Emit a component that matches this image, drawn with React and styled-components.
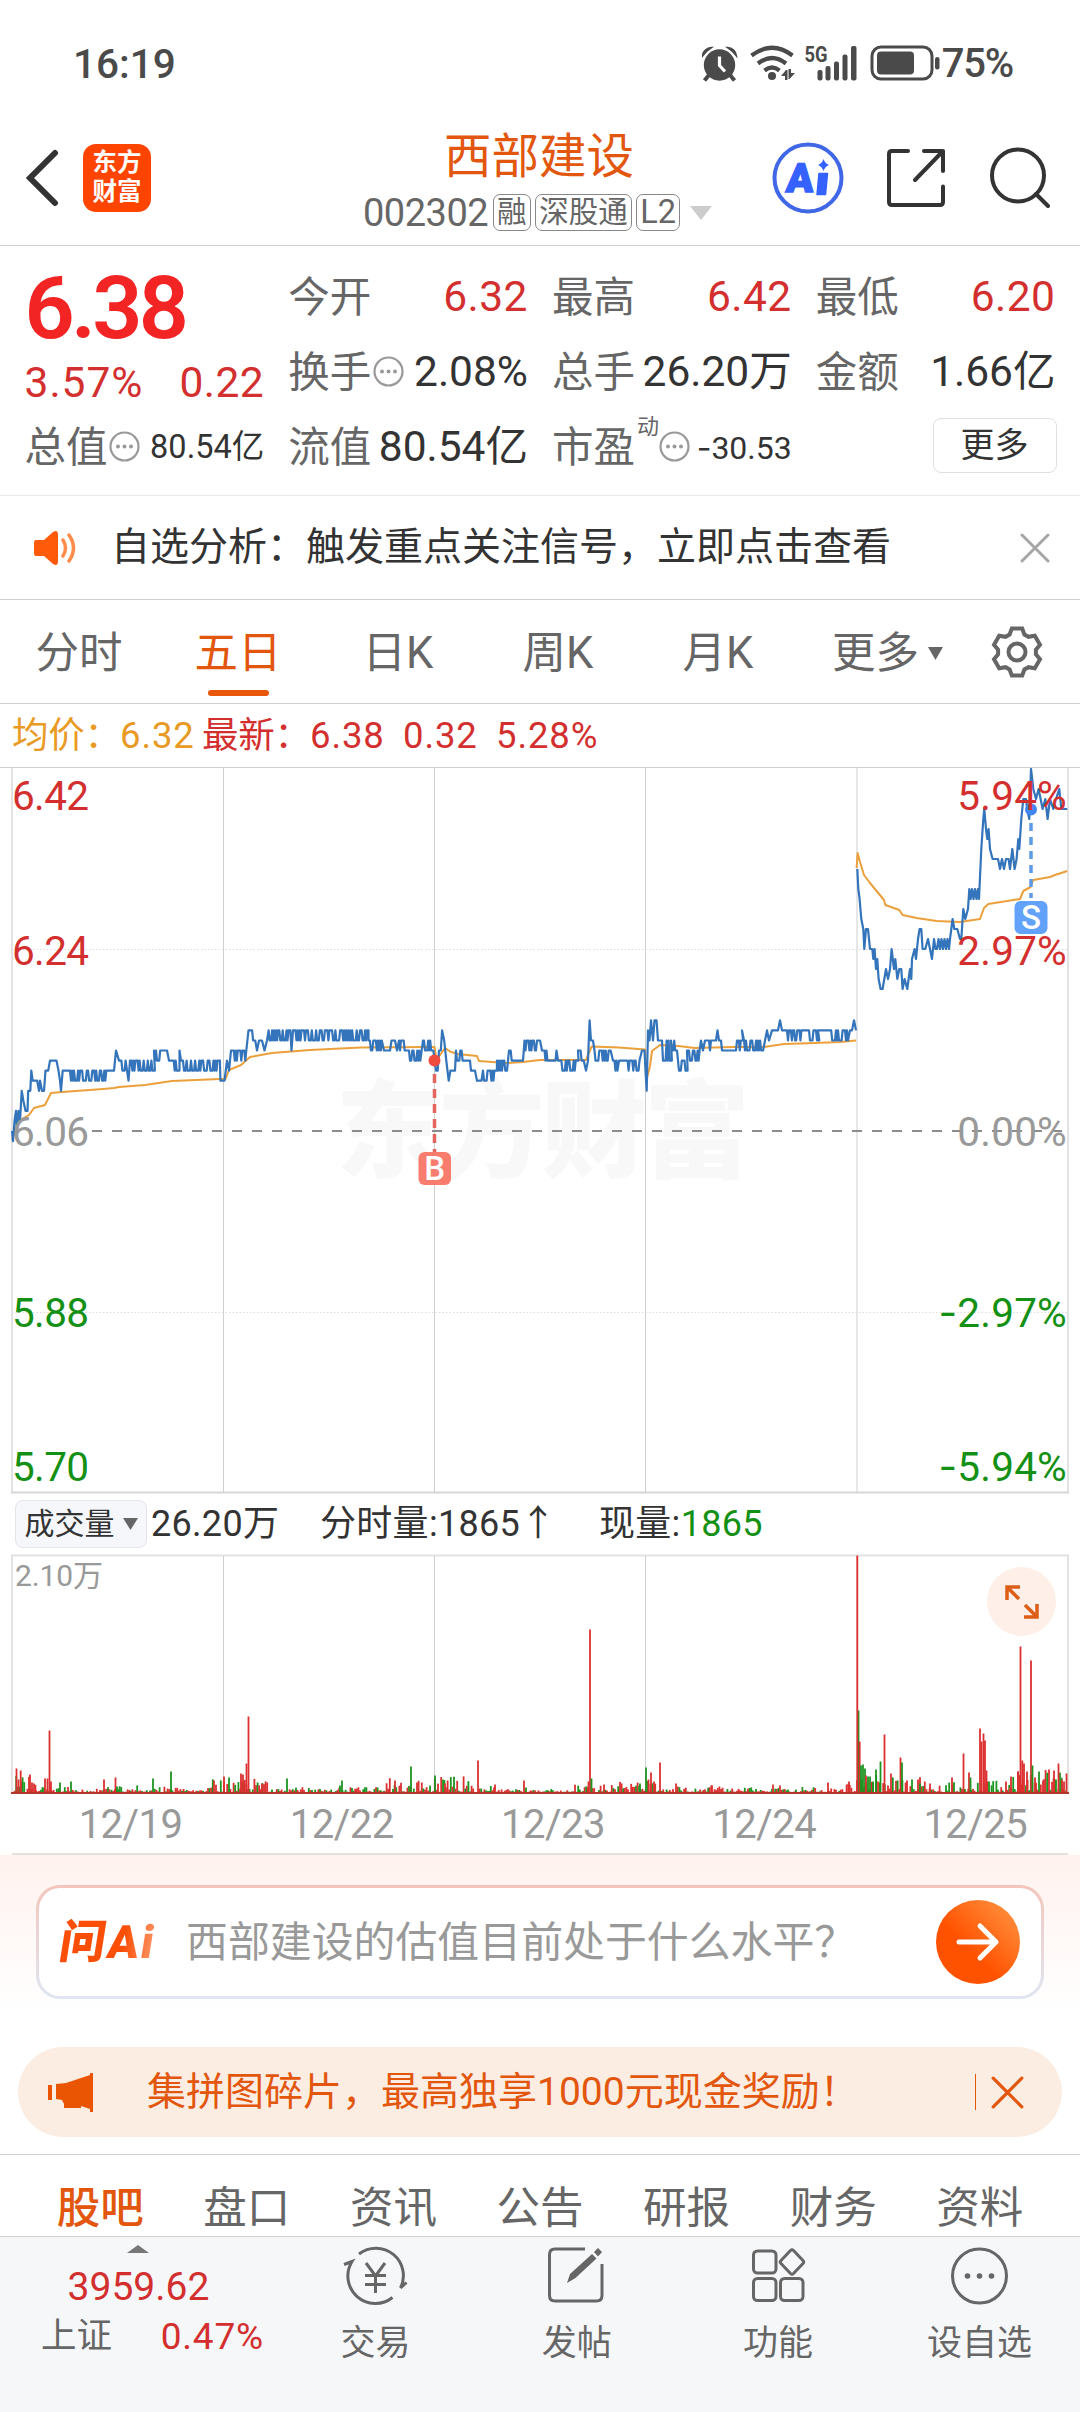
import React from "react";
import styled, { createGlobalStyle } from "styled-components";

const GlobalStyle = createGlobalStyle`
  * {
    box-sizing: border-box;
  }

  body {
    margin: 0;
    background: #fff;
    font-family: Roboto, "Noto Sans CJK SC", sans-serif;
    color: #333;
  }

  svg {
    display: block;
    flex: none;
  }
`;

const colors = {
  orange: "#e2560d",
  red: "#d32f2f",
  green: "#149014",
  text: "#333",
  label: "#666",
  muted: "#999",
  line: "#d0d0d0",
  blue: "#3474bb",
  avg: "#eba03c",
};

const Page = styled.div`
  width: 1080px;
  height: 2412px;
  display: flex;
  flex-direction: column;
  overflow: hidden;
  background: #fff;
`;

const Txt = styled.span`
  font-size: ${(p) => p.$size}px;
  color: ${(p) => p.$color || colors.text};
  letter-spacing: ${(p) => p.$ls || 0}px;
  font-weight: ${(p) => p.$weight || 400};
  line-height: 1;
  white-space: pre;
`;

const Dash = styled.span`
  font-family: Inter, sans-serif;
`;

/* status bar */

const StatusBar = styled.div`
  height: 111px;
  padding: 17px 67px 0 73px;
  display: flex;
  justify-content: space-between;
  align-items: center;
`;

const StatusIcons = styled.div`
  display: flex;
  align-items: center;
  gap: 2px;
`;

/* header */

const Header = styled.header`
  height: 135px;
  padding: 0 26px;
  display: flex;
  align-items: center;
  border-bottom: 1px solid ${colors.line};
`;

const BrandSide = styled.div`
  width: 300px;
  display: flex;
  align-items: center;
  gap: 23px;
`;

const ActionSide = styled.div`
  width: 282px;
  display: flex;
  align-items: center;
  gap: 42px;
`;

const Logo = styled.div`
  width: 68px;
  height: 68px;
  border-radius: 13px;
  background: #ff4400;
  color: #fff;
  font-size: 24.5px;
  font-weight: 700;
  line-height: 29px;
  text-align: center;
  padding-top: 4px;
`;

const Title = styled.div`
  flex: 1;
  padding-left: 37px;
  display: flex;
  flex-direction: column;

  h1 {
    margin: 2px 0 0 81px;
    font-size: 47.5px;
    font-weight: 400;
    line-height: 60px;
    color: ${colors.orange};
  }
`;

const Codes = styled.div`
  height: 37px;
  margin-top: 7px;
  display: flex;
  align-items: center;
  gap: 4.5px;
  white-space: nowrap;
`;

const Tag = styled.span`
  height: 37px;
  padding: 0 3px;
  display: flex;
  align-items: center;
  justify-content: center;
  min-width: 38px;
  border: 1.5px solid #888;
  border-radius: 7px;
  font-size: ${(p) => p.$size || 29.5}px;
  line-height: 1;
  color: ${colors.label};
`;

const DropMark = styled.div`
  margin-left: 6px;
`;

/* quote */

const Quote = styled.section`
  height: 250px;
  padding: 14px 24.5px 0;
  display: flex;
  gap: 24px;
  border-bottom: 1px solid #eaeaea;
`;

const QuoteCol = styled.div`
  flex: 1 1 0;
  min-width: 0;
`;

const QuoteRow = styled.div`
  height: ${(p) => p.$h || 75}px;
  display: flex;
  align-items: center;
  justify-content: space-between;
  white-space: nowrap;
`;

const QuoteLabel = styled.div`
  display: flex;
  align-items: center;
  font-size: 41.5px;
  line-height: 1;
  color: ${colors.label};

  sup {
    align-self: flex-start;
    margin: -11px -2px 0 2px;
    font-size: 22px;
    line-height: 1;
  }

  svg {
    margin: -2px 0 0 1.5px;
  }
`;

const MoreButton = styled.button`
  width: 124px;
  height: 55px;
  margin: -4px -1px 0 auto;
  padding: 0 0 5px;
  border: 1.5px solid #e0e0e0;
  border-radius: 8px;
  background: #fff;
  font: 34px/1 "Noto Sans CJK SC", sans-serif;
  color: ${colors.text};
`;

/* notice */

const Notice = styled.section`
  height: 104px;
  padding: 0 30px 0 33px;
  display: flex;
  align-items: center;
  border-bottom: 1px solid ${colors.line};

  > span {
    flex: 1;
    margin-left: 33px;
  }
`;

/* period tabs */

const PeriodTabs = styled.nav`
  height: 104px;
  display: flex;
  align-items: center;
  border-bottom: 1px solid ${colors.line};
`;

const PeriodTab = styled.div`
  width: 160px;
  height: 100%;
  display: flex;
  flex-direction: column;
  align-items: center;
  font-size: 43.5px;
  line-height: 108px;
  color: ${(p) => (p.$active ? colors.orange : colors.label)};

  &:first-child {
    width: 158px;
  }

  &::after {
    content: "";
    width: 61px;
    height: 6px;
    margin-top: -18px;
    border-radius: 3px;
    background: ${(p) => (p.$active ? "#e8560a" : "transparent")};
  }
`;

const MoreTab = styled.div`
  margin: 4px 48px 0 34px;
  display: flex;
  align-items: center;
  gap: 9px;
  font-size: 43.5px;
  line-height: 1;
  color: ${colors.label};
`;

const Legend = styled.div`
  height: 64px;
  padding: 2px 0 0 12px;
  display: flex;
  align-items: center;
  border-bottom: 1px solid ${colors.line};
  font-size: 36.5px;
  line-height: 1;
  white-space: pre;
`;

const LegendItem = styled.span`
  width: ${(p) => p.$w}px;
  color: ${(p) => p.$color};
  letter-spacing: ${(p) => (p.$num ? 0.9 : -0.3)}px;
`;

/* volume */

const VolumeBar = styled.div`
  height: 60px;
  padding-left: 15px;
  display: flex;
  align-items: center;
  white-space: nowrap;
`;

const VolumeSelect = styled.div`
  width: 132px;
  height: 48px;
  margin-right: 4px;
  display: flex;
  align-items: center;
  justify-content: center;
  gap: 8px;
  border: 1.5px solid #e4e5ea;
  border-radius: 8px;
  background: #f6f7fb;
  font-size: 30px;
  line-height: 1;
`;

const VolumeItem = styled.span`
  width: ${(p) => (p.$w ? `${p.$w}px` : "auto")};
  font-size: 36px;
  line-height: 1;
  letter-spacing: 0.3px;
  color: ${(p) => p.$color || colors.text};
`;

const VolumeChart = styled.div`
  height: 241px;
  position: relative;
`;

const ExpandButton = styled.div`
  position: absolute;
  top: 13px;
  right: 24px;
  width: 69px;
  height: 69px;
  border-radius: 50%;
  background: #fef0e8;
  display: flex;
  align-items: center;
  justify-content: center;
`;

const Dates = styled.div`
  height: 60px;
  margin: 0 12px;
  padding: 2px 0 0 13px;
  display: flex;
  align-items: center;
  border-bottom: 2px solid #e3e0e0;

  span {
    width: 211.2px;
    flex: none;
    text-align: center;
  }
`;

/* ask ai */

const AskSection = styled.section`
  height: 172px;
  padding: 30px 36px 0;
  background: linear-gradient(#fff2ee, #fff 92%);
`;

const AskBox = styled.div`
  height: 114px;
  padding: 0 21px;
  display: flex;
  align-items: center;
  border: 3px solid transparent;
  border-radius: 24px;
  background: linear-gradient(#fff, #fff) padding-box,
    linear-gradient(#f4c5bd, #dfe6f1) border-box;

  > span {
    flex: 1;
    margin: 2px 0 0 28px;
  }
`;

const AskLogo = styled.div`
  width: 98px;
  font-size: 46px;
  font-weight: 900;
  line-height: 1;
  letter-spacing: 2px;
  white-space: nowrap;
  transform: skewX(-9deg);
  background: linear-gradient(90deg, #fb4f08 65%, #ff9a6b);
  background-clip: text;
  color: transparent;
`;

const GoButton = styled.div`
  width: 84px;
  height: 84px;
  border-radius: 50%;
  background: linear-gradient(45deg, #ff5200 40%, #ff9a48);
  display: flex;
  align-items: center;
  justify-content: center;
`;

/* promo */

const Promo = styled.section`
  height: 90px;
  margin: 20px 18px 17px;
  padding: 0 38px 0 29px;
  display: flex;
  align-items: center;
  border-radius: 45px;
  background: #fcede3;

  > span {
    flex: 1;
    margin-left: 54px;
  }
`;

const Divider = styled.div`
  width: 1.5px;
  height: 36px;
  margin-right: 15px;
  background: ${colors.orange};
`;

const InfoTabs = styled.nav`
  height: 83px;
  padding: 32px 27px 0;
  display: flex;
  align-items: flex-start;
  border-top: 1px solid ${colors.line};
  border-bottom: 1px solid ${colors.line};

  span {
    flex: 1;
    text-align: center;
  }
`;

/* bottom bar */

const BottomBar = styled.footer`
  flex: 1;
  display: flex;
  background: #f6f7f9;
`;

const IndexCell = styled.div`
  width: 275px;
  padding: 8px 0 0 2px;
  display: flex;
  flex-direction: column;
  align-items: center;
  gap: 15px;
`;

const IndexRow = styled.div`
  width: 100%;
  margin-top: -4px;
  padding: 0 11px 0 39px;
  display: flex;
  align-items: center;
  justify-content: space-between;
`;

const NavItem = styled.div`
  width: 201.3px;
  padding-top: 9px;
  display: flex;
  flex-direction: column;
  align-items: center;
  gap: 20px;
`;

/* small icons */

const Triangle = ({ w, h, color, up }) => (
  <svg width={w} height={h} viewBox="0 0 10 10" preserveAspectRatio="none">
    <path d={up ? "M0 10L5 0l5 10z" : "M0 0h10L5 10z"} fill={color} />
  </svg>
);

const Cross = ({ size, color }) => (
  <svg width={size} height={size} viewBox="0 0 30 30">
    <path d="M2 2l26 26M28 2L2 28" stroke={color} strokeWidth="3" strokeLinecap="round" />
  </svg>
);

const InfoDots = () => (
  <svg width="31" height="31" viewBox="0 0 31 31">
    <circle cx="15.5" cy="15.5" r="14" fill="none" stroke="#999" strokeWidth="2.2" />
    {[9, 15.5, 22].map((x) => (
      <circle key={x} cx={x} cy="15.5" r="2" fill="#999" />
    ))}
  </svg>
);

const gearPath = () => {
  const pts = [];
  for (let k = 0; k < 6; k++) {
    const a = (k * Math.PI) / 3;
    [
      [-7.4, -17.5],
      [-5.2, -23.5],
      [5.2, -23.5],
      [7.4, -17.5],
    ].forEach(([x, y]) => {
      const px = x * Math.cos(a) - y * Math.sin(a);
      const py = x * Math.sin(a) + y * Math.cos(a);
      pts.push(`${px.toFixed(1)} ${py.toFixed(1)}`);
    });
  }
  return `M${pts.join("L")}z`;
};

const Gear = () => (
  <svg width="52" height="52" viewBox="-26 -26 52 52">
    <g fill="none" stroke={colors.label} strokeWidth="4">
      <path d={gearPath()} />
      <circle r="8.5" />
    </g>
  </svg>
);

const StatusGlyphs = () => (
  <svg width="238" height="56" viewBox="0 -8 238 56">
    {/* alarm */}
    <g fill="#4a4a4a">
      <circle cx="17.5" cy="21" r="15.7" />
      <path d="M0.5 12a9 9 0 0 1 9-8.500Q4 7 0.500 12zM34.500 12a9 9 0 0 0-9-8.500Q31 7 34.500 12z" stroke="#4a4a4a" strokeWidth="1.500" />
      <path d="M7 31l-4.500 5.500M28 31l4.500 5.500" stroke="#4a4a4a" strokeWidth="4" />
    </g>
    <path d="M17.500 12.500v9l5.500 6" fill="none" stroke="#fff" strokeWidth="3.200" />
    {/* wifi */}
    <g fill="none" stroke="#4a4a4a" strokeWidth="4.200">
      <path d="M49.500 11.500Q70 -4 90.500 11.500" />
      <path d="M56 19.500Q70 8.500 84 19.500" />
      <path d="M62.500 26.500Q70 20.500 77.500 26.500" />
    </g>
    <circle cx="70" cy="32" r="4" fill="#4a4a4a" />
    <path d="M79 32l5-6h1.500v10h-2.500v-4zM93 29l-5.500 6H86.500V25h2.500v4z" fill="#4a4a4a" />
    {/* signal */}
    <g fill="#4a4a4a">
      <rect x="115.500" y="26" width="5" height="10.500" rx="2" />
      <rect x="123.500" y="22" width="5" height="14.500" rx="2" />
      <rect x="132" y="17.500" width="5" height="19" rx="2" />
      <rect x="140.500" y="10.500" width="5" height="26" rx="2" />
      <rect x="149" y="2" width="5.500" height="34.500" rx="2" />
    </g>
    <text x="102.500" y="18" fontSize="22.500" fontWeight="700" fill="#4a4a4a" textLength="23" lengthAdjust="spacingAndGlyphs">
      5G
    </text>
    {/* battery */}
    <rect x="170" y="3" width="60" height="32" rx="9" fill="none" stroke="#4a4a4a" strokeWidth="3" />
    <rect x="175" y="7.500" width="37" height="23" rx="4" fill="#4a4a4a" />
    <rect x="233" y="13" width="4.500" height="12.500" rx="2.200" fill="#4a4a4a" />
  </svg>
);

const AiIcon = () => (
  <svg width="72" height="72" viewBox="0 0 72 72">
    <circle cx="36" cy="36" r="33.500" fill="none" stroke="#4068e6" strokeWidth="4" />
    <text x="14" y="50" fontSize="40" fontWeight="900" fill="#3562ff" stroke="#3562ff" strokeWidth="1.500" transform="skewX(-4) translate(3 0)">
      A
    </text>
    <path d="M47 31.500h8.500l-2 21h-8.500z" fill="#3562ff" stroke="#3562ff" strokeWidth="1.500" strokeLinejoin="round" />
    <path d="M51.500 17Q53 21.500 57 23 53 24.500 51.500 29 50 24.500 46 23 50 21.500 51.500 17z" fill="#3562ff" />
  </svg>
);

const ShareIcon = () => (
  <svg width="60" height="60" viewBox="0 0 60 60" fill="none" stroke="#333" strokeWidth="4" strokeLinecap="round" strokeLinejoin="round">
    <path d="M22 3H6Q3 3 3 6v48q0 3 3 3h48q3 0 3-3V38.500" />
    <path d="M38 3h19v20M57 3L29 32" />
  </svg>
);

const SearchIcon = () => (
  <svg width="62" height="62" viewBox="0 0 62 62" fill="none" stroke="#333" strokeWidth="4" strokeLinecap="round">
    <circle cx="30" cy="28.500" r="26" />
    <path d="M48 47l12 12" />
  </svg>
);

/* chart data */

const seeded = (seed) => () => {
  seed = (seed * 16807) % 2147483647;
  return seed / 2147483647;
};

const X0 = 12;
const ZERO = 363;
const STEP = 10.06;

// [x, cents above 6.06] or [from, to, low, high] for a flickering stretch
const price = [
  [12, 0], [13, -1], [14.5, 1], [16, 2], [17, 0], [18.5, 2], [20, 1], [21.7, 4], [23.4, 3], [25.5, 2], [27.5, 2],
  [28.2, 4], [30.3, 4], [31.3, 6], [32.7, 5], [37.2, 5], [39, 4], [40, 5], [42, 4], [44, 4], [45.5, 6], [48.2, 6],
  [50, 7], [56.5, 7], [58.5, 6], [60, 5], [61, 4], [62.7, 6], [69, 6],
  [70, 108, 5, 6], [112, 6], [114, 6], [116, 8], [119, 7], [120, 126, 6, 7], [128.5, 5], [130, 153, 6, 7],
  [154, 163, 7, 8], [165, 8], [167, 8], [169, 7], [171, 177, 6, 7], [179.5, 8], [181, 219, 6, 7], [220.4, 5],
  [224.5, 5], [227, 7], [229, 6], [231, 247, 7, 8], [248.5, 10], [250, 255, 9, 10], [257, 8], [259, 9], [262, 9],
  [264.5, 8], [267, 9], [268.6, 290, 9, 10], [291.500, 8], [293, 368, 9, 10], [368.500, 382, 8, 9], [384, 8], [390, 8],
  [391.500, 9], [395, 9], [397, 8], [399, 407, 8, 9], [409, 421, 7, 8], [423, 433, 8, 9], [434.6, 7], [436, 6],
  [437.700, 6], [439, 8], [440.800, 8], [442.100, 10], [444.200, 9], [446.300, 7], [448.700, 5], [450.400, 6],
  [455, 6], [456, 463, 7, 8], [464, 7], [470, 7], [471, 6], [475, 6], [477, 5], [481.500, 5], [483, 496, 5, 6],
  [497, 508, 6, 7], [509, 513, 7, 8], [515, 7], [523, 7], [524.500, 539, 8, 9], [540, 9], [542, 549, 7, 8], [550, 7],
  [555.500, 7], [556.500, 8], [558, 7], [559, 577, 6, 7], [578, 584, 7, 8], [586, 6], [588, 7], [589.600, 11],
  [591, 9], [593, 9], [594.500, 611, 7, 8], [613, 618, 6, 7], [619, 625, 7, 7], [626, 640, 6, 7], [642, 8], [644.500, 8],
  [645.500, 6], [646.700, 4], [648, 10], [649.500, 9], [651, 11], [653, 9], [654.500, 11], [656.500, 11], [658, 9],
  [661, 9], [662, 670, 7, 9], [671, 677, 8, 9], [678, 686, 6, 7], [687, 700, 7, 8], [701, 9], [703, 8], [705, 9],
  [709, 9], [710, 8], [711, 9], [716, 9], [717.500, 10], [719, 725, 8, 9], [726, 8], [736, 8], [737, 741, 8, 9],
  [742, 10], [744, 763, 8, 9], [765, 9], [767, 10], [769, 9], [772, 10], [778, 10], [780, 11], [782, 10], [786, 10],
  [787, 804, 9, 10], [805, 10], [808, 10], [809, 817, 9, 10], [818, 10], [828, 10], [830, 848, 9, 10], [850, 10],
  [852, 10], [854, 11], [856, 10],
];

// last session, [x, y] inside the chart
const lastDay = [
  [857.300, 101], [858.300, 121], [859.500, 130], [861.300, 151], [863.300, 161], [864.300, 181], [866, 161], [868, 161],
  [870, 181], [872.300, 181], [873.300, 191], [874.600, 181], [876, 201], [877.300, 191], [878.600, 211], [880.600, 221],
  [882.600, 221], [884.300, 211], [886, 201], [888, 211], [890, 201], [891.600, 181], [894, 201], [895.300, 191],
  [897.300, 211], [899.300, 201], [901.300, 201], [902.600, 221], [904.600, 211], [907.300, 221], [908.600, 211],
  [910, 201], [911.300, 211], [912, 191], [914.600, 181], [916, 191], [918, 171], [919.600, 161], [921.300, 161],
  [922.600, 181], [925.300, 181], [928, 171], [930, 181], [932, 191], [934, 171], [935.500, 181], [937, 181], [938.500, 171],
  [940, 181], [941.500, 171], [943, 181], [944.500, 171], [946, 181], [947.500, 171], [949, 181], [950, 171],
  [952.600, 151], [954.300, 161], [957.300, 161], [960, 171], [961.300, 171], [963.300, 141], [965.300, 151],
  [968, 141], [969.300, 121], [970.600, 131], [972, 121], [973.500, 131], [975, 121], [976.500, 131], [978, 121], [979, 131],
  [981.300, 81], [983.300, 51], [984.300, 41], [986, 61], [987.300, 71], [988.600, 61], [990, 81], [992.600, 91],
  [998, 91], [1000, 101], [1002, 91], [1004, 101], [1006, 91], [1008.600, 91], [1010, 101], [1012.300, 81], [1014.600, 101],
  [1016.600, 91], [1018.300, 71], [1019.300, 81], [1021.300, 51], [1023.300, 31], [1026, 31], [1027.300, 42],
  [1029.300, 51], [1031, 1], [1033.300, 21], [1036, 31], [1038.600, 21], [1040.600, 31], [1042.600, 41], [1045.300, 31],
  [1047.600, 51], [1050, 31], [1053.300, 41], [1056, 31], [1059.300, 21], [1061.300, 41], [1067.300, 41],
];

const toLine = (pts) => pts.map(([x, y]) => `${x.toFixed(1)},${y.toFixed(1)}`).join(" ");

const pricePoints = () => {
  const rand = seeded(77);
  const out = [];
  price.forEach((p) => {
    if (p.length === 2) {
      out.push([p[0], ZERO - p[1] * STEP]);
      return;
    }
    const [from, to, low, high] = p;
    let level = high;
    for (let x = from; x <= to; ) {
      out.push([x, ZERO - level * STEP]);
      const hold = rand() > 0.55 ? 1 + rand() * 1.8 : 0;
      if (hold) out.push([x + hold, ZERO - level * STEP]);
      level = level === high ? low : high;
      x += hold + 1;
    }
  });
  return out;
};

const avgA = [
  [12, 372], [16.500, 359], [20, 352], [29, 347], [34, 340], [45, 337], [51, 325], [62, 324], [103, 321], [114, 320],
  [119, 319], [145, 317], [172, 313], [220, 311], [225.500, 311], [229, 302], [241, 297], [250, 289], [272, 285],
  [310, 282], [361, 279.500], [427, 279], [434.500, 279], [436.600, 292], [445, 280], [451, 284], [458, 286], [477, 288],
  [479, 293], [506, 295], [523, 294], [540, 292], [586, 292], [591.600, 278.500], [619, 279.500], [645, 281.500],
  [647, 310], [650, 298], [652, 283], [660, 277], [678, 278], [695, 280], [733, 279], [764, 279], [784, 276],
  [815, 275], [840, 274], [856, 272.500],
];

const avgB = [
  [856.600, 100], [857.600, 85], [860, 94], [864, 107], [870, 115], [876.600, 123], [884, 132], [885.300, 137],
  [899.300, 142], [902.600, 147], [916.600, 150], [936.600, 153], [960, 154], [980, 151], [984, 140], [988.300, 136],
  [1020, 131], [1023.300, 123], [1030.600, 119], [1033.300, 112], [1050, 109], [1055, 107], [1067.300, 103],
];

const axisLeft = [
  ["6.42", 27, colors.red],
  ["6.24", 182, colors.red],
  ["6.06", 363, colors.muted],
  ["5.88", 544, colors.green],
  ["5.70", 698, colors.green],
];

const axisRight = [
  ["5.94%", 27, colors.red],
  ["2.97%", 182, colors.red],
  ["0.00%", 363, colors.muted],
  ["2.97%", 544, colors.green, "-"],
  ["5.94%", 698, colors.green, "-"],
];

const columns = [223.500, 434.500, 645.500, 857];

const PriceChart = () => (
  <svg width="1080" height="726" viewBox="0 0 1080 726">
    <text x="336" y="401" fontSize="106" fontWeight="900" fill="#f8f8f8" textLength="414">
      东方财富
    </text>
    {columns.map((x) => (
      <path key={x} d={`M${x} 0V724`} stroke="#cfcfcf" strokeWidth="1" />
    ))}
    <path d="M12 0V724M1068 0V724" stroke="#e2e2e2" strokeWidth="2" />
    <path d="M11 724.500H1069" stroke="#d6d6d6" strokeWidth="2" />
    <path d="M12 181.500H1068M12 544.500H1068" stroke="#ddd" strokeWidth="1" strokeDasharray="1.500 2" />
    <path d="M92 363H1068" stroke="#8c8c8c" strokeWidth="2" strokeDasharray="10 10" />
    <g fill="none" stroke={colors.avg} strokeWidth="2" strokeLinejoin="round">
      <polyline points={toLine(avgA)} />
      <polyline points={toLine(avgB)} />
    </g>
    <g fill="none" stroke={colors.blue} strokeWidth="2.200" strokeLinejoin="round">
      <polyline points={toLine(pricePoints())} />
      <polyline points={toLine(lastDay)} />
    </g>
    {/* buy marker */}
    <path d="M434.500 306V384" stroke="#e4655c" strokeWidth="3.500" strokeDasharray="9 6" />
    <circle cx="434.500" cy="292.500" r="6" fill="#ef4a3e" />
    <rect x="418.500" y="384" width="32.500" height="33" rx="6" fill="#f97d6e" />
    <text x="434.700" y="412" fontSize="33" fontWeight="500" fill="#fff" textAnchor="middle">
      B
    </text>
    {/* sell marker */}
    <circle cx="1031" cy="41.500" r="6" fill="#3f86f3" />
    <path d="M1031 55V130" stroke="#5f9ae6" strokeWidth="3.500" strokeDasharray="8 6" />
    <rect x="1014.500" y="133" width="33" height="33" rx="6" fill="#62a2fb" />
    <text x="1031" y="161" fontSize="33" fontWeight="500" fill="#fff" textAnchor="middle">
      S
    </text>
    {axisLeft.map(([label, y, color]) => (
      <text key={label} x={X0} y={y + 14.500} fontSize="40.500" fill={color} textLength="77">
        {label}
      </text>
    ))}
    {axisRight.map(([label, y, color, sign]) => (
      <text key={y} x="1067" y={y + 14.500} fontSize="40.500" fill={color} textAnchor="end" letterSpacing="0.2">
        {sign && <tspan fontFamily="Inter">{sign}</tspan>}
        {label}
      </text>
    ))}
  </svg>
);

// [x, height, is green]
const spikes = [
  [16.500, 25], [18.500, 14], [20.700, 23], [30, 19], [32, 11], [34, 10], [45, 15], [47.500, 15], [49.500, 63], [51, 12],
  [60, 11, 1], [71, 12, 1], [104, 14], [115.500, 16], [117, 7, 1], [153, 15, 1], [171, 22, 1], [214, 13], [224, 17],
  [229, 16, 1], [241, 20], [243, 19], [246.500, 30], [248.500, 77], [262, 10], [287, 15, 1], [342, 13, 1], [340, 8, 1],
  [395, 13], [411, 27, 1], [417, 11], [435, 18, 1], [443, 14, 1], [445, 10], [478, 33], [495, 9], [524, 13], [526, 6, 1],
  [588.500, 12], [590, 164], [591.500, 15, 1], [604, 9], [640, 10, 1], [646, 26, 1], [648.500, 14], [651, 21], [654, 12],
  [660, 31], [676, 10], [712, 8], [773, 9], [780, 8], [828, 11], [849, 12],
  [858.500, 83, 1], [857.300, 238], [859.700, 52], [861, 28, 1], [863, 29, 1], [865, 25, 1], [866, 18], [868, 17, 1],
  [870, 17, 1], [873, 12, 1], [876, 24, 1], [878, 12], [880.500, 32, 1], [884.500, 59], [891, 20], [900.500, 36],
  [902, 31, 1], [907, 13], [918, 14], [920, 10, 1], [930, 10], [952, 16], [963.500, 40], [969, 21], [970.500, 16, 1],
  [980, 65], [981.500, 52], [983.500, 60], [985, 53], [986.500, 23], [989, 12, 1], [1011, 17], [1018, 22], [1020.500, 147],
  [1022.300, 33], [1024, 30], [1027, 22], [1031, 133], [1032.500, 28, 1], [1035, 16], [1039, 22, 1], [1043, 13],
  [1049, 24], [1054, 23], [1056, 14, 1], [1058.500, 30], [1062, 14], [1064, 12], [1066.500, 20],
];

// busy stretches: [from, to, average height]
const busy = [
  [13, 36, 8], [36, 110, 2.500], [110, 200, 3.500], [200, 272, 7], [272, 385, 2.500], [385, 430, 7], [430, 470, 8],
  [470, 500, 4], [500, 575, 1.500], [575, 620, 4], [620, 665, 5.500], [665, 740, 3.500], [740, 845, 2.500], [845, 857, 7],
  [857, 880, 10], [880, 930, 8], [930, 965, 5], [965, 990, 10], [990, 1010, 6], [1010, 1036, 11], [1036, 1067, 11],
];

const volumeBars = () => {
  const rand = seeded(4242);
  const out = [];
  busy.forEach(([from, to, avg]) => {
    for (let x = from; x < to; x += 1.600) {
      const r = rand();
      out.push([x, 1.500 + avg * r * r * 2, rand() > 0.62]);
    }
  });
  return out.concat(spikes);
};

const VolumeSvg = () => (
  <svg width="1080" height="241" viewBox="0 0 1080 241">
    <path d="M12 239V1.500H1068V239" fill="none" stroke="#e2e2e2" strokeWidth="2" />
    {columns.map((x) => (
      <path key={x} d={`M${x} 2V238`} stroke="#cfcfcf" strokeWidth="1" />
    ))}
    {volumeBars().map(([x, h, green], i) => (
      <rect key={i} x={x - 0.900} y={239.500 - h} width="1.800" height={h} fill={green ? "#1c9420" : "#dc3030"} />
    ))}
    <path d="M11 239H1069" stroke="#b3342a" strokeWidth="2.200" />
    <text x="15" y="32" fontSize="30" fill={colors.muted} textLength="88">
      2.10万
    </text>
  </svg>
);

const Stat = ({ label, sup, info, value, sign, color, size = 42.5 }) => (
  <QuoteRow>
    <QuoteLabel>
      {label}
      {sup && <sup>{sup}</sup>}
      {info && <InfoDots />}
    </QuoteLabel>
    <Txt $size={size} $color={color} $ls={color ? 0.5 : 0}>
      {sign && <Dash>{sign}</Dash>}
      {value}
    </Txt>
  </QuoteRow>
);

const periods = ["分时", "五日", "日K", "周K", "月K"];
const infoTabs = ["股吧", "盘口", "资讯", "公告", "研报", "财务", "资料"];
const dates = ["12/19", "12/22", "12/23", "12/24", "12/25"];

const navIcons = {
  交易: (
    <>
      <path d="M16 8A27.500 27.500 0 0 1 57.500 42L63.500 36.500" />
      <path d="M49.500 51.500A27.500 27.500 0 0 1 9 15.500L1 18.500" />
      <path d="M23 17l9.500 13L42 17M32.500 30v17M22 29.500h21M22 38.500h21" />
    </>
  ),
  发帖: (
    <>
      <path d="M41 3H11Q5.500 3 5.500 8.500v41q0 5.500 5.500 5.500h41.500q5.500 0 5.500-5.500V18" />
      <path d="M23 37l3-9L48 8l4.500 4.500L31.500 32z" fill="#666" stroke="none" />
      <path d="M50 6l4-4 4 4-4 4.500z" fill="#666" stroke="none" />
    </>
  ),
  功能: (
    <>
      <rect x="7.500" y="5" width="22.500" height="22" rx="4" />
      <rect x="7.500" y="32.500" width="22.500" height="22" rx="4" />
      <rect x="34.500" y="32.500" width="22.500" height="22" rx="4" />
      <path d="M44.500 4.500q1.500-1.500 3 0L57 14.500q1.500 1.500 0 3L47.500 27.500q-1.500 1.500-3 0L35 17.500q-1.500-1.500 0-3z" />
    </>
  ),
  设自选: (
    <>
      <circle cx="32.500" cy="30" r="27" />
      {[20.500, 32.500, 44.500].map((x) => (
        <circle key={x} cx={x} cy="30" r="2.800" fill="#666" stroke="none" />
      ))}
    </>
  ),
};

const App = () => (
  <Page>
    <GlobalStyle />

    <StatusBar>
      <Txt $size={40.5} $weight={500} $color="#4a4a4a">
        16:19
      </Txt>
      <StatusIcons>
        <StatusGlyphs />
        <Txt $size={40} $weight={500} $color="#4a4a4a" $ls={-1.2}>
          75%
        </Txt>
      </StatusIcons>
    </StatusBar>

    <Header>
      <BrandSide>
        <svg width="34" height="60" viewBox="0 0 34 60">
          <path d="M29 5L4 30l25 25" fill="none" stroke="#333" strokeWidth="6" strokeLinecap="round" />
        </svg>
        <Logo>
          东方
          <br />
          财富
        </Logo>
      </BrandSide>
      <Title>
        <h1>西部建设</h1>
        <Codes>
          <Txt $size={38} $color={colors.label} $ls={-0.5}>
            002302
          </Txt>
          <Tag>融</Tag>
          <Tag>深股通</Tag>
          <Tag $size={32.5}>L2</Tag>
          <DropMark>
            <Triangle w={22} h={14} color="#ccc" />
          </DropMark>
        </Codes>
      </Title>
      <ActionSide>
        <AiIcon />
        <ShareIcon />
        <SearchIcon />
      </ActionSide>
    </Header>

    <Quote>
      <QuoteCol>
        <QuoteRow $h={96}>
          <Txt $size={88} $weight={600} $color="#f22424" $ls={-3.8}>
            6.38
          </Txt>
        </QuoteRow>
        <QuoteRow $h={54}>
          <Txt $size={42.5} $color={colors.red} $ls={1}>
            3.57%
          </Txt>
          <Txt $size={42.5} $color={colors.red} $ls={0.5}>
            0.22
          </Txt>
        </QuoteRow>
        <Stat label="总值" info value="80.54亿" size={32.5} />
      </QuoteCol>
      <QuoteCol>
        <Stat label="今开" value="6.32" color={colors.red} />
        <Stat label="换手" info value="2.08%" />
        <Stat label="流值" value="80.54亿" />
      </QuoteCol>
      <QuoteCol>
        <Stat label="最高" value="6.42" color={colors.red} />
        <Stat label="总手" value="26.20万" />
        <Stat label="市盈" sup="动" info sign="-" value="30.53" size={32} />
      </QuoteCol>
      <QuoteCol>
        <Stat label="最低" value="6.20" color={colors.red} />
        <Stat label="金额" value="1.66亿" />
        <QuoteRow>
          <MoreButton>更多</MoreButton>
        </QuoteRow>
      </QuoteCol>
    </Quote>

    <Notice>
      <svg width="45" height="36" viewBox="0 0 45 36">
        <path d="M3 10h8L20 2q5-3 5 3v26q0 6-5 3l-9-8H3q-2 0-2-3V13q0-3 2-3z" fill="#ff5a0a" />
        <path d="M30 10q5 8 0 16M36 5q9 13 0 26" fill="none" stroke="#ff8c4a" strokeWidth="3.500" strokeLinecap="round" />
      </svg>
      <Txt $size={39}>自选分析：触发重点关注信号，立即点击查看</Txt>
      <Cross size={30} color="#a6a6a6" />
    </Notice>

    <PeriodTabs>
      {periods.map((name) => (
        <PeriodTab key={name} $active={name === "五日"}>
          {name}
        </PeriodTab>
      ))}
      <MoreTab>
        更多
        <Triangle w={15} h={13} color={colors.label} />
      </MoreTab>
      <Gear />
    </PeriodTabs>

    <Legend>
      <LegendItem $w={108} $color="#e89a24">均价：</LegendItem>
      <LegendItem $w={82} $color="#e89a24" $num>6.32</LegendItem>
      <LegendItem $w={108} $color={colors.red}>最新：</LegendItem>
      <LegendItem $w={93} $color={colors.red} $num>6.38</LegendItem>
      <LegendItem $w={93} $color={colors.red} $num>0.32</LegendItem>
      <LegendItem $w={110} $color={colors.red} $num>5.28%</LegendItem>
    </Legend>

    <PriceChart />

    <VolumeBar>
      <VolumeSelect>
        成交量
        <Triangle w={15} h={12} color="#666" />
      </VolumeSelect>
      <VolumeItem $w={169}>26.20万</VolumeItem>
      <VolumeItem $w={279}>分时量:1865↑</VolumeItem>
      <VolumeItem>
        现量:<VolumeItem $color={colors.green}>1865</VolumeItem>
      </VolumeItem>
    </VolumeBar>

    <VolumeChart>
      <VolumeSvg />
      <ExpandButton>
        <svg width="34" height="34" viewBox="0 0 34 34" fill="none" stroke="#dc5e18" strokeWidth="3.500">
          <path d="M2 15V2h13M2 2l12 12M32 19v13H19M32 32L20 20" />
        </svg>
      </ExpandButton>
    </VolumeChart>

    <Dates>
      {dates.map((d) => (
        <Txt key={d} $size={40} $color={colors.muted} $ls={-0.5}>
          {d}
        </Txt>
      ))}
    </Dates>

    <AskSection>
      <AskBox>
        <AskLogo>问Ai</AskLogo>
        <Txt $size={41.9} $color={colors.muted}>
          西部建设的估值目前处于什么水平？
        </Txt>
        <GoButton>
          <svg width="44" height="40" viewBox="0 0 44 40" fill="none" stroke="#fff" strokeWidth="5" strokeLinecap="round" strokeLinejoin="round">
            <path d="M3 20h37M24 4l16 16-16 16" />
          </svg>
        </GoButton>
      </AskBox>
    </AskSection>

    <Promo>
      <svg width="46" height="40" viewBox="0 0 46 40">
        <path d="M1 13h4v15H1zM9 12l10-1L43 3V1h3v39h-3v-3l-9-3v2H17v-4l-2-4-6-1z" fill="#ea5504" />
      </svg>
      <Txt $size={39} $color={colors.orange}>
        集拼图碎片，最高独享1000元现金奖励！
      </Txt>
      <Divider />
      <Cross size={33} color={colors.orange} />
    </Promo>

    <InfoTabs>
      {infoTabs.map((name, i) => (
        <Txt key={name} $size={43.5} $color={i === 0 ? colors.orange : colors.label} $weight={i === 0 ? 500 : 400}>
          {name}
        </Txt>
      ))}
    </InfoTabs>

    <BottomBar>
      <IndexCell>
        <Triangle w={22} h={8} color="#777" up />
        <Txt $size={39} $color={colors.red}>
          3959.62
        </Txt>
        <IndexRow>
          <Txt $size={35.5} $color={colors.label}>
            上证
          </Txt>
          <Txt $size={37} $color={colors.red} $ls={0.8}>
            0.47%
          </Txt>
        </IndexRow>
      </IndexCell>
      {Object.keys(navIcons).map((name) => (
        <NavItem key={name}>
          <svg width="65" height="60" viewBox="0 0 65 60" fill="none" stroke="#666" strokeWidth="3">
            {navIcons[name]}
          </svg>
          <Txt $size={35} $color={colors.label}>
            {name}
          </Txt>
        </NavItem>
      ))}
    </BottomBar>
  </Page>
);

export default App;
